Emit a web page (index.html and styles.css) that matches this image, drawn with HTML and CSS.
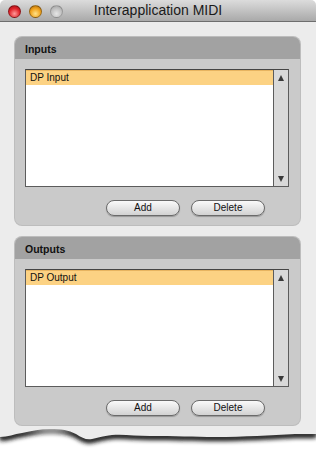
FILE: index.html
```html
<!DOCTYPE html>
<html lang="en">
<head>
    <meta charset="UTF-8">
    <title>Interapplication MIDI</title>
    <link rel="stylesheet" href="styles.css">
</head>
<body>
    <div class="window">
        <div class="titlebar">
            <div class="lights">
                <span class="light red"></span>
                <span class="light orange"></span>
                <span class="light off"></span>
            </div>
            <div class="title">Interapplication MIDI</div>
        </div>
        <div class="content">
            <div class="panel">
                <div class="panel-head">Inputs</div>
                <div class="panel-body">
                    <div class="list">
                        <div class="rows">
                            <div class="row selected">DP Input</div>
                        </div>
                        <div class="scroll">
                            <span class="arrow up"></span>
                            <span class="arrow down"></span>
                        </div>
                    </div>
                    <div class="buttons">
                        <button class="btn">Add</button>
                        <button class="btn">Delete</button>
                    </div>
                </div>
            </div>
            <div class="panel">
                <div class="panel-head">Outputs</div>
                <div class="panel-body">
                    <div class="list">
                        <div class="rows">
                            <div class="row selected">DP Output</div>
                        </div>
                        <div class="scroll">
                            <span class="arrow up"></span>
                            <span class="arrow down"></span>
                        </div>
                    </div>
                    <div class="buttons">
                        <button class="btn">Add</button>
                        <button class="btn">Delete</button>
                    </div>
                </div>
            </div>
        </div>
        <!-- torn bottom edge of the screenshot -->
        <svg class="torn" width="316" height="25" viewBox="0 0 316 25">
            <defs>
                <filter id="blur" x="-5%" y="-50%" width="110%" height="200%">
                    <feGaussianBlur stdDeviation="2"/>
                </filter>
                <path id="edge" d="M0 0 L0 10 C8 10 14 7 22 6 C32 4 40 2 50 2 C62 2 68 3 76 7 C82 11 86 13 92 12 C98 11 102 9 112 8 C124 7 136 9 150 9 C175 9 195 10 215 10 C245 10 270 8 295 7 L316 7 L316 0 Z"/>
            </defs>
            <use href="#edge" fill="#1e1e1e" transform="translate(0 4)" filter="url(#blur)"/>
            <use href="#edge" fill="#3a3a3a" transform="translate(0 1.5)" filter="url(#blur)"/>
            <use href="#edge" fill="#ececec"/>
        </svg>
    </div>
</body>
</html>
```

FILE: styles.css
```css
body {
    margin: 0;
    padding: 0;
    background: #fff;
    font-family: "Liberation Sans", Arial, sans-serif;
    color: #111;
}
.window {
    width: 316px;
}
.titlebar {
    height: 21px;
    border-bottom: 1px solid #6e6e6e;
    background: linear-gradient(#dcdcdc, #a9a9a9);
    display: flex;
    align-items: center;
    position: relative;
    border-radius: 5px 5px 0 0;
}
.lights {
    display: flex;
    gap: 8px;
    padding-left: 8px;
    padding-top: 1px;
}
.light {
    width: 13px;
    height: 13px;
    border-radius: 50%;
    box-sizing: border-box;
    border: 1px solid rgba(0, 0, 0, 0.35);
}
.light.red {
    background: radial-gradient(circle at 50% 70%, #ff9a9a 0%, #e0242a 55%, #9a0d12 100%);
}
.light.orange {
    background: radial-gradient(circle at 50% 70%, #ffe28a 0%, #f0a21c 55%, #a2620a 100%);
}
.light.off {
    background: radial-gradient(circle at 50% 70%, #e6e6e6 0%, #bdbdbd 60%, #9a9a9a 100%);
    border-color: rgba(0, 0, 0, 0.2);
}
.title {
    position: absolute;
    left: 0;
    right: 0;
    top: 2px;
    text-align: center;
    font-size: 14px;
    color: #1a1a1a;
}
.content {
    background: #ececec;
    padding: 15px 16px 3px 15px;
    display: flex;
    flex-direction: column;
    gap: 12px;
}
.panel {
    width: 285px;
    border-radius: 7px;
    background: #cacaca;
    box-shadow: 0 0 0 1px #bdbdbd;
    overflow: hidden;
}
.panel-head {
    height: 22px;
    box-sizing: border-box;
    background: #a2a2a2;
    padding: 6px 0 0 10px;
    font-size: 10.5px;
    font-weight: bold;
    color: #111;
}
.panel-body {
    padding: 10px 11px 9px 10px;
}
.list {
    height: 118px;
    box-sizing: border-box;
    border: 1px solid #5c5c5c;
    border-top-color: #444;
    background: #fff;
    display: flex;
}
.rows {
    flex: 1;
}
.row {
    height: 15px;
    line-height: 15px;
    padding-left: 4px;
    font-size: 10px;
}
.row.selected {
    background: #fcd283;
    border-top: 1px solid #e7b460;
    height: 14px;
    line-height: 14px;
}
.scroll {
    width: 14px;
    border-left: 1px solid #5c5c5c;
    background: #d9d9d9;
    display: flex;
    flex-direction: column;
    justify-content: space-between;
    align-items: center;
    padding: 5px 0 4px;
}
.arrow {
    width: 0;
    height: 0;
    border-left: 3.5px solid transparent;
    border-right: 3.5px solid transparent;
}
.arrow.up {
    border-bottom: 6px solid #3a3a3a;
}
.arrow.down {
    border-top: 6px solid #3a3a3a;
}
.buttons {
    display: flex;
    justify-content: flex-end;
    gap: 11px;
    padding: 13px 24px 0 0;
}
.btn {
    width: 74px;
    height: 16px;
    padding: 0;
    border: 1px solid #6a6a6a;
    border-radius: 8px;
    background: linear-gradient(#fafafa, #e4e4e4 55%, #d2d2d2);
    box-shadow: 0 1px 1px rgba(0, 0, 0, 0.25);
    font-family: "Liberation Sans", Arial, sans-serif;
    font-size: 10px;
    color: #111;
    line-height: 14px;
}
.torn {
    display: block;
    margin-top: -1px;
}
```
